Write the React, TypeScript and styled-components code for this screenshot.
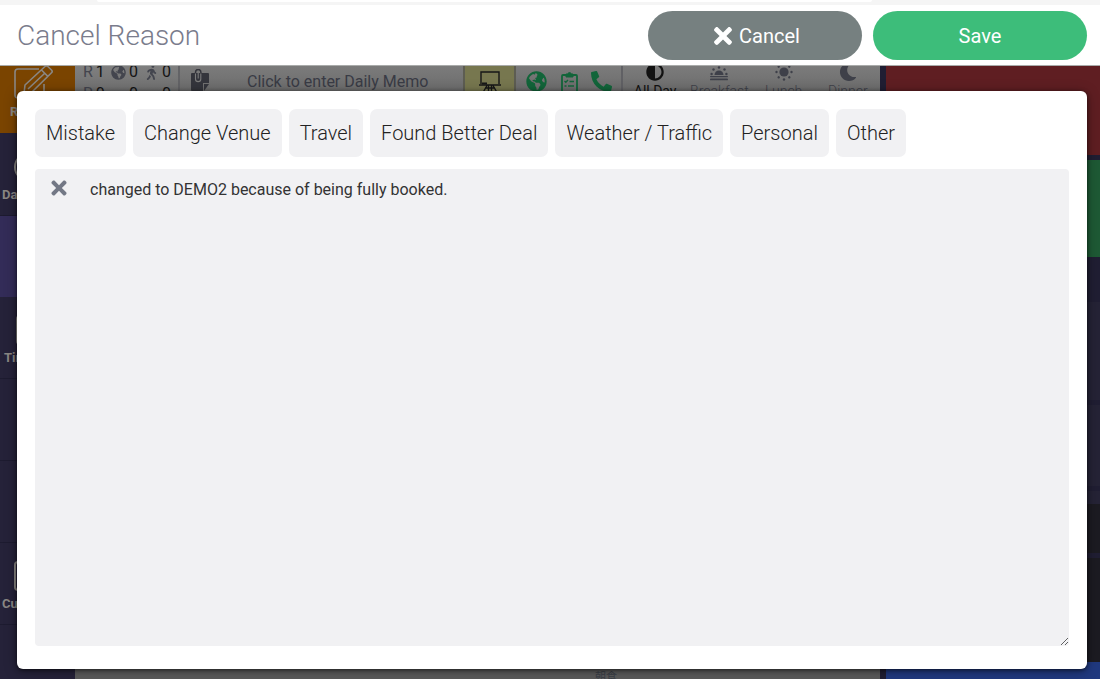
import React, { useState } from "react";
import styled, { createGlobalStyle } from "styled-components";
import { FaAdjust, FaGlobeAmericas, FaMoon, FaPhoneAlt, FaTimes, FaWalking } from "react-icons/fa";

const GlobalStyle = createGlobalStyle`
  *, *::before, *::after { box-sizing: border-box; }
  body {
    margin: 0;
    font-family: Roboto, "Noto Sans CJK JP", sans-serif;
    background: #201e33;
  }
  button, textarea { font-family: inherit; }
`;

const Screen = styled.div`
  position: relative;
  display: flex;
  flex-direction: column;
  height: 100vh;
  overflow: hidden;
`;

const BrowserEdge = styled.div`
  flex: none;
  height: 5px;
  padding: 0 228px 0 97px;
  background: #f5f5f5;
`;

const AddressBar = styled.div`
  height: 2px;
  border-radius: 0 0 8px 8px;
  background: #ffffff;
`;

const Workspace = styled.div`
  flex: 1;
  min-height: 0;
  display: flex;
  margin-top: 61px;
`;

const Sidebar = styled.nav`
  flex: none;
  width: 75px;
  display: flex;
  flex-direction: column;
`;

const SideItem = styled.a<{ $tone?: string; $height: number; $indent?: number }>`
  flex: none;
  height: ${(p) => p.$height}px;
  padding: 0 0 13px ${(p) => p.$indent ?? 2}px;
  display: flex;
  flex-direction: column;
  align-items: flex-start;
  justify-content: flex-end;
  gap: 6px;
  border-bottom: 1px solid ${(p) => p.$tone ?? "#1d1b30"};
  background: ${(p) => p.$tone ?? "#252239"};
  color: #8a8784;
  font-size: 13px;
  line-height: 14px;
  font-weight: 700;
  text-decoration: none;

  svg { flex: none; margin-left: 4px; }
`;

const ItemMark = styled.span<{ $round?: boolean }>`
  width: 32px;
  height: 30px;
  margin-left: 12px;
  border: 2px solid #8a8784;
  border-radius: ${(p) => (p.$round ? 16 : 4)}px;
`;

const Main = styled.main`
  flex: 1;
  min-width: 0;
  display: flex;
  flex-direction: column;
  background: #5b5b5b;
`;

const Toolbar = styled.div`
  flex: none;
  height: 48px;
  display: flex;
  background: linear-gradient(#7b7b7b, #6c6c6c 26px);
`;

const Counts = styled.div`
  flex: none;
  width: 105px;
  padding: 0 7px 0 8px;
  border-right: 2px solid #636366;
  background: linear-gradient(#7f7f7f, #707070 26px);
`;

const CountRow = styled.div`
  height: 22px;
  margin-top: -5px;
  display: flex;
  align-items: center;
  justify-content: space-between;
  color: #43454e;
  font-size: 16px;
  line-height: 20px;

  & + & { margin-top: 0; }
  b { color: #141414; font-weight: 400; }
  span { display: flex; align-items: center; gap: 3px; }
`;

const Memo = styled.button`
  flex: 1;
  min-width: 0;
  display: flex;
  align-items: flex-start;
  padding: 0 0 0 11px;
  border: 0;
  background: none;
  color: #393b45;
  font-size: 16px;
  line-height: 20px;
  text-align: left;

  svg { flex: none; margin-top: 3px; }
  span { padding: 6px 0 0 38px; white-space: nowrap; }
`;

const EaselButton = styled.button`
  flex: none;
  width: 53px;
  padding: 5px 0 0;
  border: solid #5d5d52;
  border-width: 0 2px;
  background: #77774f;
  display: flex;
  justify-content: center;
  align-items: flex-start;
`;

const QuickLinks = styled.div`
  flex: none;
  width: 107px;
  padding: 5px 9px 0 10px;
  display: flex;
  justify-content: space-between;
  border-right: 2px solid #606064;
  color: #12653a;
`;

const PlainButton = styled.button`
  padding: 0;
  border: 0;
  background: none;
  color: inherit;
  display: flex;
`;

const Meals = styled.div`
  flex: none;
  width: 257px;
  display: grid;
  grid-template-columns: repeat(4, 1fr);
`;

const Meal = styled.button<{ $on?: boolean }>`
  padding: 0;
  border: 0;
  background: none;
  display: flex;
  flex-direction: column;
  align-items: center;
  color: ${(p) => (p.$on ? "#121212" : "#3e4049")};
  font-size: 14px;
  line-height: 20px;
  font-weight: ${(p) => (p.$on ? 400 : 300)};

  svg { flex: none; margin-top: -3px; }
`;

const MainFoot = styled.div`
  margin-top: auto;
  height: 8px;
  padding-left: 520px;
  color: #3b4048;
  font-size: 11px;
  line-height: 14px;
`;

const RightRail = styled.aside`
  flex: none;
  width: 220px;
  display: flex;
  flex-direction: column;
  border-left: 6px solid #201e33;
  background: #201e33;
`;

const Tile = styled.div<{ $tone: string; $height: number; $gap?: number }>`
  flex: none;
  height: ${(p) => p.$height}px;
  margin-bottom: ${(p) => p.$gap ?? 5}px;
  background: ${(p) => p.$tone};
`;

const LastTile = styled.div`
  flex: 1;
  background: #20397f;
`;

const Overlay = styled.div`
  position: absolute;
  inset: 5px 0 0;
  display: flex;
  flex-direction: column;
`;

const TitleBar = styled.header`
  flex: none;
  height: 61px;
  padding: 6px 13px 5px 17px;
  display: flex;
  align-items: center;
  gap: 11px;
  border-bottom: 1px solid #a9abaa;
  background: #ffffff;
`;

const Title = styled.h1`
  flex: 1;
  margin: 0;
  color: #7a7c8c;
  font-size: 28px;
  line-height: 36px;
  font-weight: 300;
`;

const PillButton = styled.button<{ $tone: string }>`
  width: 214px;
  height: 49px;
  padding: 0;
  display: flex;
  align-items: center;
  justify-content: center;
  gap: 3px;
  border: 0;
  border-radius: 25px;
  background: ${(p) => p.$tone};
  color: #ffffff;
  font-size: 20px;
  line-height: 26px;
  font-weight: 400;
`;

const Dialog = styled.section`
  flex: 1;
  min-height: 0;
  margin: 25px 13px 10px 17px;
  padding: 18px 18px 23px;
  display: flex;
  flex-direction: column;
  gap: 12px;
  border-radius: 6px;
  background: #ffffff;
  box-shadow: 0 1px 4px rgba(0, 0, 0, 0.6), 0 2px 14px rgba(0, 0, 0, 0.3);
`;

const Reasons = styled.div`
  display: flex;
  flex-wrap: wrap;
  gap: 7px;
`;

const Reason = styled.button`
  height: 48px;
  padding: 0 11px;
  border: 0;
  border-radius: 7px;
  background: #f1f1f3;
  color: #222222;
  font-size: 20px;
  line-height: 26px;
  font-weight: 300;
`;

const Note = styled.div`
  position: relative;
  flex: 1;
  min-height: 0;
`;

const NoteText = styled.textarea`
  display: block;
  width: 100%;
  height: 100%;
  padding: 10px 16px 9px 55px;
  border: 0;
  border-radius: 4px;
  background: #f1f1f3;
  color: #333333;
  font-size: 16px;
  line-height: 22px;
  outline: none;
`;

const ClearButton = styled(PlainButton)`
  position: absolute;
  top: 8px;
  left: 13px;
  color: #737885;
`;

const EditIcon = () => (
  <svg width="40" height="34" viewBox="0 0 40 34" fill="none" stroke="currentColor" strokeWidth="1.6" strokeLinejoin="round">
    <path d="M25 4H4a3 3 0 0 0-3 3v23a3 3 0 0 0 3 3h23a3 3 0 0 0 3-3V19" />
    <path d="M11 20L31 1.500a2 2 0 0 1 2.800 0L37.500 5a2 2 0 0 1 0 2.800L18 27l-8 1.500zM27.500 5l6.500 6.500M14 24L31 8" />
  </svg>
);

const ClipNoteIcon = () => (
  <svg width="18" height="23" viewBox="0 0 18 23">
    <path d="M1 4h16a1 1 0 0 1 1 1v9h-6v8H1a1 1 0 0 1-1-1V5a1 1 0 0 1 1-1z" fill="#34353c" />
    <path d="M13 22v-7h5z" fill="#34353c" />
    <path d="M4.500 5V3.200a2.700 2.700 0 0 1 5.400 0V4" fill="none" stroke="#34353c" strokeWidth="1.500" />
    <path d="M4.500 4.500v5.500a2.600 2.600 0 0 0 5.300 0V4.500M7.200 4v5.500" fill="none" stroke="#7b7b7b" strokeWidth="1.100" />
  </svg>
);

const EaselIcon = () => (
  <svg width="22" height="22" viewBox="0 0 22 22" fill="none" stroke="#171717" strokeWidth="1.4">
    <path d="M2 13V1h18v12M0 14h22M8 14.500l-4 7M14 14.500l4 7M9.500 14v8M12.500 14v8M6 17h10" />
    <path d="M3 12.500h5" strokeWidth="2" />
  </svg>
);

const ChecklistIcon = () => (
  <svg width="17" height="22" viewBox="0 0 17 22" fill="none" stroke="currentColor" strokeWidth="1.8">
    <path d="M5 4H2a1 1 0 0 0-1 1v15a1 1 0 0 0 1 1h13a1 1 0 0 0 1-1V5a1 1 0 0 0-1-1h-3" />
    <path d="M5 3h2a1.500 1.500 0 0 1 3 0h2v3H5z" fill="currentColor" strokeWidth="1" />
    <path d="M3.500 10l1.300 1.300L7 9M8.500 10.500H13M3.500 15h2M7 15h6" strokeWidth="1.4" />
  </svg>
);

const SunriseIcon = () => (
  <svg width="18" height="18" viewBox="0 0 18 18" fill="currentColor">
    <path d="M4.500 12a4.500 4.500 0 0 1 9 0z" />
    <circle cx="9" cy="4.500" r="1.200" />
    <circle cx="3.500" cy="6.500" r="1.200" />
    <circle cx="14.500" cy="6.500" r="1.200" />
    <circle cx="1.600" cy="11" r="1.200" />
    <circle cx="16.400" cy="11" r="1.200" />
    <rect x="0" y="13" width="18" height="1.200" rx=".6" />
    <rect x="0" y="15.500" width="18" height="1.800" rx=".9" />
  </svg>
);

const SunIcon = () => (
  <svg width="18" height="18" viewBox="0 0 18 18" fill="currentColor">
    <circle cx="9" cy="9" r="4.600" />
    {[0, 45, 90, 135, 180, 225, 270, 315].map((a) => (
      <circle key={a} cx="9" cy="1.500" r="1.200" transform={`rotate(${a} 9 9)`} />
    ))}
  </svg>
);

const reasons = ["Mistake", "Change Venue", "Travel", "Found Better Deal", "Weather / Traffic", "Personal", "Other"];

export default function App() {
  const [note, setNote] = useState("changed to DEMO2 because of being fully booked.");

  return (
    <Screen>
      <GlobalStyle />
      <BrowserEdge>
        <AddressBar />
      </BrowserEdge>

      <Workspace>
        <Sidebar>
          <SideItem href="#r" $tone="#7a4400" $height={67} $indent={10}>
            <EditIcon />
            R
          </SideItem>
          <SideItem href="#da" $height={83}>
            <ItemMark $round />
            Da
          </SideItem>
          <SideItem href="#current" $tone="#332c58" $height={81} />
          <SideItem href="#tim" $height={82} $indent={4}>
            <ItemMark />
            Tim
          </SideItem>
          <SideItem href="#list" $height={82} />
          <SideItem href="#more" $height={82} />
          <SideItem href="#cu" $height={82}>
            <ItemMark />
            Cu
          </SideItem>
          <SideItem href="#end" $height={82} />
        </Sidebar>

        <Main>
          <Toolbar>
            <Counts>
              <CountRow>
                <span>R <b>1</b></span>
                <span><FaGlobeAmericas size={15} /> <b>0</b></span>
                <span><FaWalking size={15} /> <b>0</b></span>
              </CountRow>
              <CountRow>
                <span>R <b>0</b></span>
                <b>0</b>
                <b>0</b>
              </CountRow>
            </Counts>
            <Memo>
              <ClipNoteIcon />
              <span>Click to enter Daily Memo</span>
            </Memo>
            <EaselButton aria-label="Floor plan">
              <EaselIcon />
            </EaselButton>
            <QuickLinks>
              <PlainButton aria-label="Web"><FaGlobeAmericas size={21} /></PlainButton>
              <PlainButton aria-label="Checklist"><ChecklistIcon /></PlainButton>
              <PlainButton aria-label="Phone"><FaPhoneAlt size={21} /></PlainButton>
            </QuickLinks>
            <Meals>
              <Meal $on><FaAdjust size={18} />All Day</Meal>
              <Meal><SunriseIcon />Breakfast</Meal>
              <Meal><SunIcon />Lunch</Meal>
              <Meal><FaMoon size={18} />Dinner</Meal>
            </Meals>
          </Toolbar>
          <MainFoot>朝食</MainFoot>
        </Main>

        <RightRail>
          <Tile $tone="#5f1e22" $height={89} />
          <Tile $tone="#1e5a35" $height={97} $gap={45} />
          <Tile $tone="#252336" $height={98} />
          <Tile $tone="#252336" $height={81} />
          <Tile $tone="#252336" $height={13} $gap={0} />
          <Tile $tone="#1c1b22" $height={49} />
          <Tile $tone="#1c1b22" $height={104} $gap={0} />
          <LastTile />
        </RightRail>
      </Workspace>

      <Overlay>
        <TitleBar>
          <Title id="dialog-title">Cancel Reason</Title>
          <PillButton $tone="#768080"><FaTimes size={26} />Cancel</PillButton>
          <PillButton $tone="#3dbd7a">Save</PillButton>
        </TitleBar>
        <Dialog role="dialog" aria-labelledby="dialog-title">
          <Reasons>
            {reasons.map((reason) => (
              <Reason key={reason} onClick={() => setNote(reason)}>{reason}</Reason>
            ))}
          </Reasons>
          <Note>
            <NoteText aria-label="Cancel Reason" value={note} onChange={(e) => setNote(e.target.value)} />
            <ClearButton aria-label="Clear" onClick={() => setNote("")}>
              <FaTimes size={22} />
            </ClearButton>
          </Note>
        </Dialog>
      </Overlay>
    </Screen>
  );
}
